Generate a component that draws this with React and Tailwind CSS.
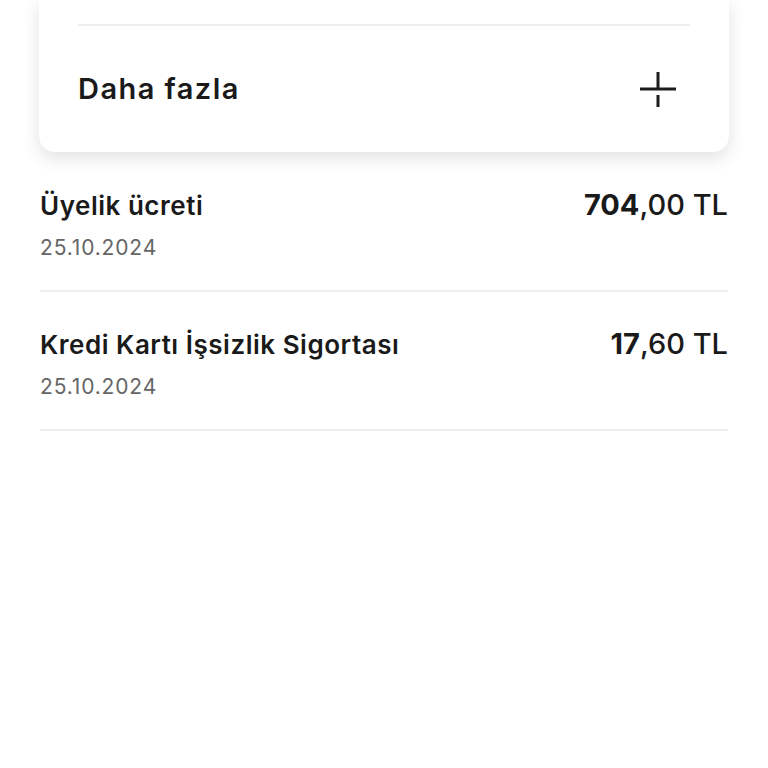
const items = [
  { title: 'Üyelik ücreti', date: '25.10.2024', whole: '704', cents: ',00 TL' },
  { title: 'Kredi Kartı İşsizlik Sigortası', date: '25.10.2024', whole: '17', cents: ',60 TL' },
];

function PlusIcon() {
  return (
    <svg width="38" height="38" viewBox="0 0 38 38" fill="none">
      <path d="M19 1v18M19 24v12M1 18h36" stroke="#1c1c1c" strokeWidth="3" />
    </svg>
  );
}

export default function App() {
  return (
    <div className="min-h-[768px] bg-white font-['Inter',sans-serif] text-[#1a1a1a]">
      <div className="mx-[39px] rounded-b-2xl bg-white px-[39px] shadow-[0_6px_18px_rgba(0,0,0,0.12)]">
        <div className="h-[26px] border-b-2 border-[#eeeeee]" />
        <div className="flex h-[126px] items-center justify-between">
          <span className="text-[29px] font-semibold tracking-[0.05em]">Daha fazla</span>
          <span className="mr-[13px] mt-[2px]"><PlusIcon /></span>
        </div>
      </div>
      <div className="mx-10 mt-[37px]">
        {items.map((it, i) => (
          <div
            key={it.title}
            className={`flex flex-col gap-[12px] border-b-2 border-[#eeeeee] pb-[28px] ${i > 0 ? 'pt-[36px]' : ''}`}
          >
            <div className="flex items-baseline justify-between">
              <span className="text-[26px] font-semibold leading-[32px] tracking-[0.02em]">{it.title}</span>
              <span className="text-[29px] font-medium leading-[32px]">
                <span className="font-bold">{it.whole}</span>{it.cents}
              </span>
            </div>
            <span className="text-[21px] leading-[28px] tracking-[0.04em] text-[#666666]">{it.date}</span>
          </div>
        ))}
      </div>
    </div>
  );
}
